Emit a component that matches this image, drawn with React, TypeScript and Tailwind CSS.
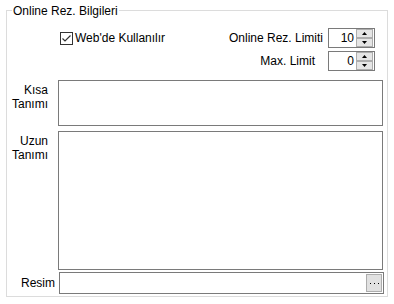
import React from "react";

function SpinBox({ value }: { value: string }) {
  return (
    <div className="flex h-[20px] w-[47px] border border-[#7a7a7a] bg-white">
      <div className="flex-1 pr-[2px] text-right leading-[18px]">{value}</div>
      <div className="mr-[1px] flex w-[17px] flex-col">
        <div className="flex h-[9px] items-center justify-center border border-[#adadad] bg-[#e5e5e5]">
          <svg width="5" height="3" viewBox="0 0 5 3">
            <polygon points="2.5,0 5,3 0,3" fill="#000" />
          </svg>
        </div>
        <div className="flex h-[9px] items-center justify-center border border-[#adadad] bg-[#e5e5e5]">
          <svg width="5" height="3" viewBox="0 0 5 3">
            <polygon points="0,0 5,0 2.5,3" fill="#000" />
          </svg>
        </div>
      </div>
    </div>
  );
}

export default function App() {
  return (
    <div
      className="h-[304px] w-[394px] bg-white pt-[10px] text-[12px] text-black"
      style={{ fontFamily: '"Liberation Sans", Arial, sans-serif' }}
    >
      <div className="relative ml-[6px] flex h-[287px] w-[382px] flex-col border border-[#dcdcdc]">
        <span className="absolute left-[5px] top-[-7px] bg-white px-[1px] leading-[14px]">
          Online Rez. Bilgileri
        </span>

        {/* Row 1 */}
        <div className="mt-[17px] flex h-[20px] items-center">
          <div className="ml-[53px] flex h-[13px] w-[13px] items-center justify-center border border-[#333333] bg-white">
            <svg width="11" height="11" viewBox="0 0 11 11">
              <polyline points="1.5,5.5 4,8 9.5,2.5" fill="none" stroke="#333333" strokeWidth="1.2" />
            </svg>
          </div>
          <span className="ml-[2px] leading-[14px]">Web'de Kullanılır</span>
          <span className="ml-auto leading-[14px]">Online Rez. Limiti</span>
          <div className="ml-[5px] mr-[12px]">
            <SpinBox value="10" />
          </div>
        </div>

        {/* Row 2 */}
        <div className="mt-[3px] flex h-[20px] items-center justify-end">
          <span className="leading-[14px]">Max. Limit</span>
          <div className="ml-[13px] mr-[12px]">
            <SpinBox value="0" />
          </div>
        </div>

        {/* Kısa Tanımı */}
        <div className="mt-[9px] flex">
          <div className="w-[41px] pt-[3px] text-right leading-[14px]">
            Kısa
            <br />
            Tanımı
          </div>
          <div className="ml-[10px] h-[46px] w-[325px] border border-[#7a7a7a] bg-white" />
        </div>

        {/* Uzun Tanımı */}
        <div className="mt-[5px] flex">
          <div className="w-[41px] pt-[3px] text-right leading-[14px]">
            Uzun
            <br />
            Tanımı
          </div>
          <div className="ml-[10px] h-[139px] w-[325px] border border-[#7a7a7a] bg-white" />
        </div>

        {/* Resim */}
        <div className="mt-[2px] flex h-[22px] items-center">
          <div className="w-[48px] text-right leading-[14px]">Resim</div>
          <div className="ml-[4px] flex h-[22px] w-[325px] justify-end border border-[#7a7a7a] bg-white p-[1px]">
            <div className="flex h-[18px] w-[16px] items-center justify-center gap-[3px] border border-[#adadad] bg-[#e1e1e1]">
              <span className="h-[1px] w-[1px] bg-black" />
              <span className="h-[1px] w-[1px] bg-black" />
              <span className="h-[1px] w-[1px] bg-black" />
            </div>
          </div>
        </div>
      </div>
    </div>
  );
}
